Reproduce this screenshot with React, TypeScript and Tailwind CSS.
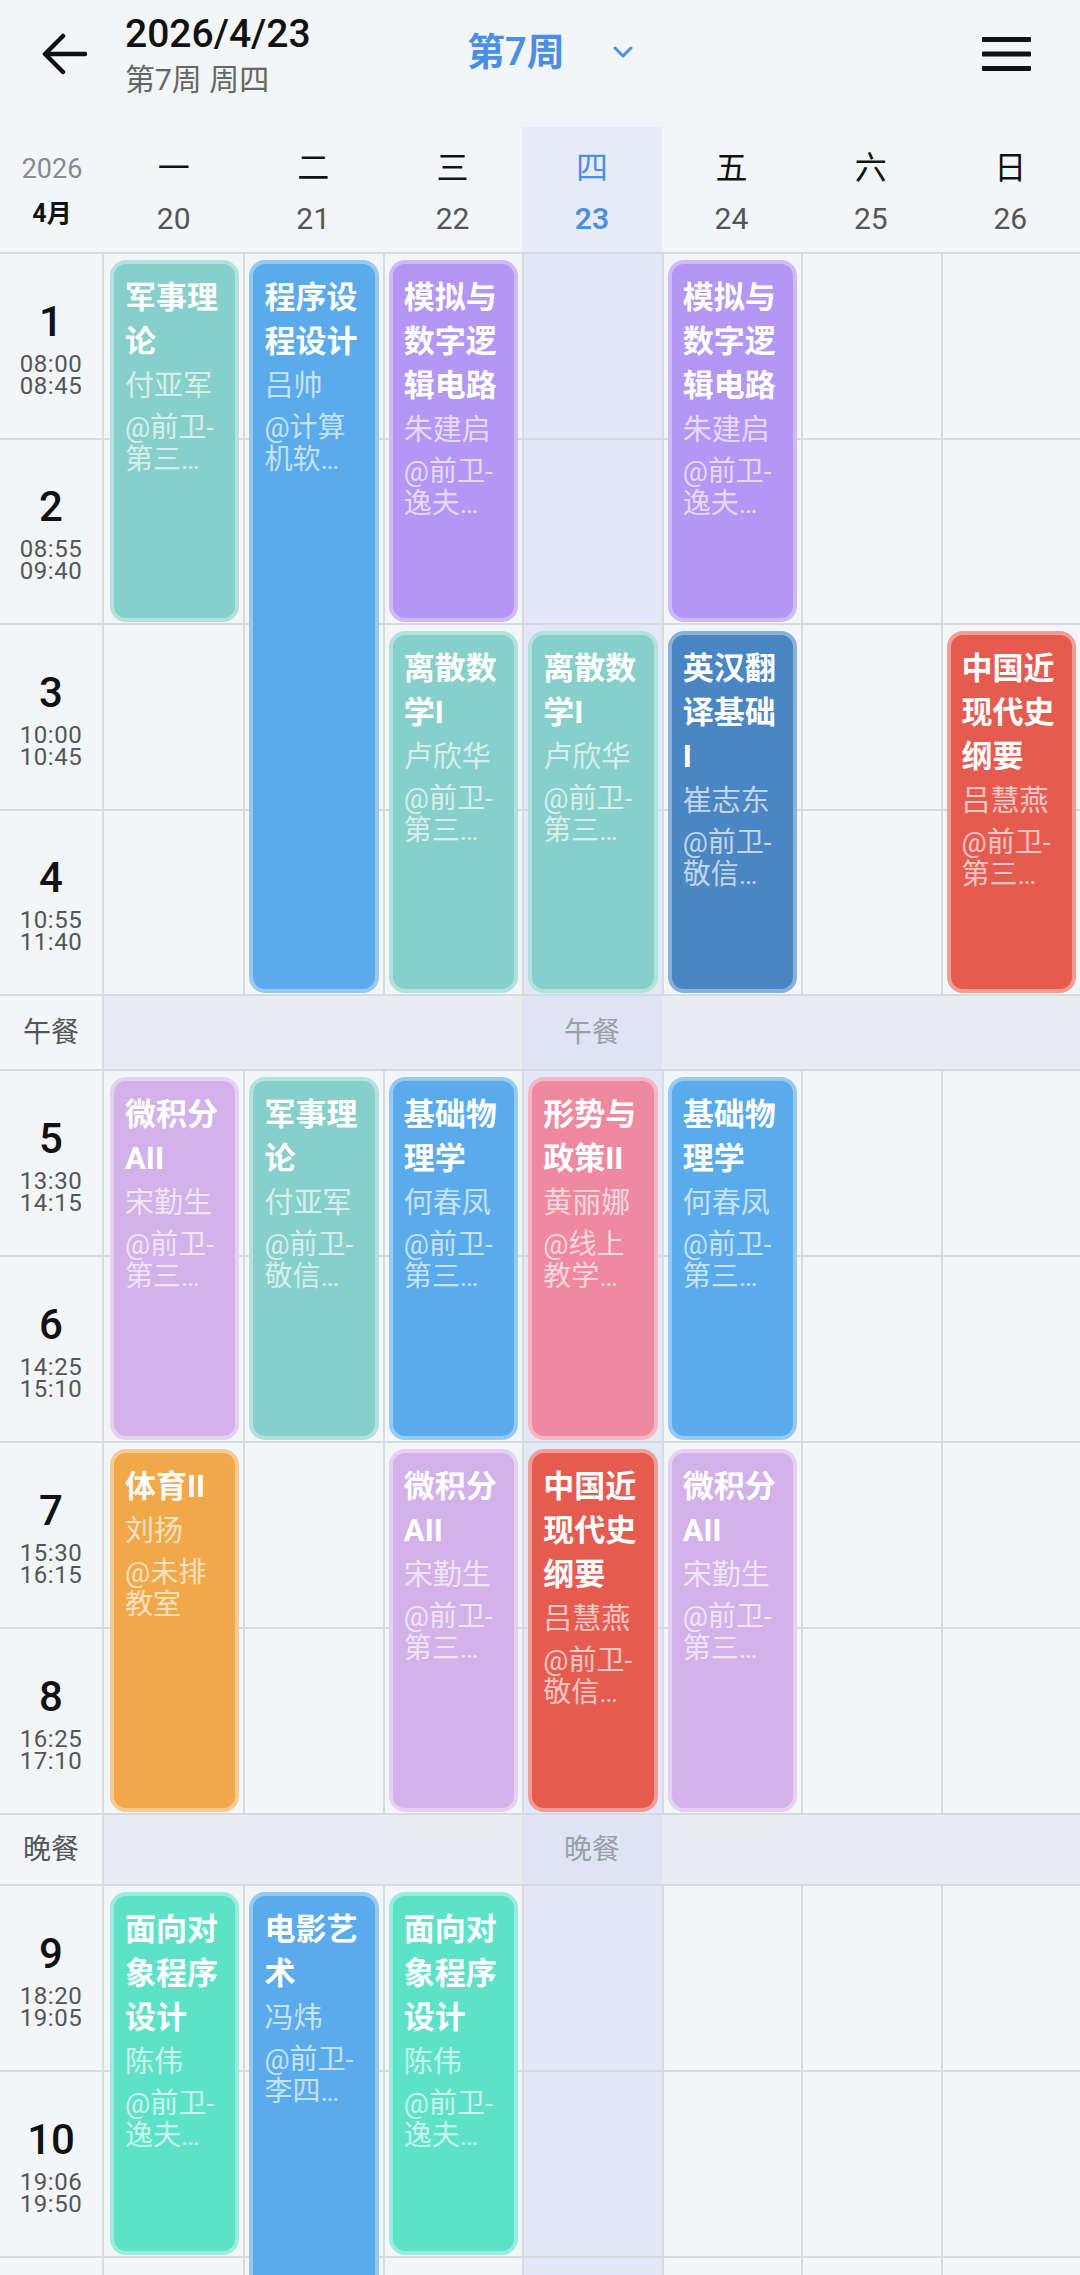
import React from "react";

type Tone = "teal" | "blue" | "violet" | "navy" | "red" | "lilac" | "pink" | "orange" | "mint";

type Course = {
  day: number; // 1..7
  row: number; // body grid row
  span: number;
  title: string[];
  teacher: string;
  place: string[];
  tone: Tone;
};

const toneClass: Record<Tone, string> = {
  teal: "bg-[#87cfca] border-[#b3e2de]",
  blue: "bg-[#5aabeb] border-[#97caf2]",
  violet: "bg-[#b496f5] border-[#cfbaf8]",
  navy: "bg-[#4a86c3] border-[#88b0d9]",
  red: "bg-[#e65b50] border-[#f19c94]",
  lilac: "bg-[#d3b1e9] border-[#e6d0f3]",
  pink: "bg-[#ef899f] border-[#f6b6c4]",
  orange: "bg-[#f0a849] border-[#f6ca90]",
  mint: "bg-[#5ee2c7] border-[#9aedde]",
};

const ROW = [
  "",
  "row-start-1",
  "row-start-2",
  "row-start-3",
  "row-start-4",
  "row-start-5",
  "row-start-6",
  "row-start-7",
  "row-start-8",
  "row-start-9",
  "row-start-10",
  "row-start-11",
  "row-start-12",
  "row-start-13",
];
const COL = ["", "col-start-1", "col-start-2", "col-start-3", "col-start-4", "col-start-5", "col-start-6", "col-start-7", "col-start-8"];
const SPAN = ["", "row-span-1", "row-span-2", "row-span-3", "row-span-4"];

const TODAY = 4;

const days = [
  { name: "一", date: "20" },
  { name: "二", date: "21" },
  { name: "三", date: "22" },
  { name: "四", date: "23" },
  { name: "五", date: "24" },
  { name: "六", date: "25" },
  { name: "日", date: "26" },
];

type BodyRow = { kind: "period"; n: string; start: string; end: string } | { kind: "meal"; label: string };

// the 11th period is only a sliver at the bottom edge, so it has no label
const rows: BodyRow[] = [
  { kind: "period", n: "1", start: "08:00", end: "08:45" },
  { kind: "period", n: "2", start: "08:55", end: "09:40" },
  { kind: "period", n: "3", start: "10:00", end: "10:45" },
  { kind: "period", n: "4", start: "10:55", end: "11:40" },
  { kind: "meal", label: "午餐" },
  { kind: "period", n: "5", start: "13:30", end: "14:15" },
  { kind: "period", n: "6", start: "14:25", end: "15:10" },
  { kind: "period", n: "7", start: "15:30", end: "16:15" },
  { kind: "period", n: "8", start: "16:25", end: "17:10" },
  { kind: "meal", label: "晚餐" },
  { kind: "period", n: "9", start: "18:20", end: "19:05" },
  { kind: "period", n: "10", start: "19:06", end: "19:50" },
  { kind: "period", n: "", start: "", end: "" },
];

const military = { title: ["军事理", "论"], teacher: "付亚军" };
const calculus = { title: ["微积分", "AII"], teacher: "宋勤生", place: ["@前卫-", "第三…"] };
const oop = { title: ["面向对", "象程序", "设计"], teacher: "陈伟", place: ["@前卫-", "逸夫…"] };
const logic = { title: ["模拟与", "数字逻", "辑电路"], teacher: "朱建启", place: ["@前卫-", "逸夫…"] };
const discrete = { title: ["离散数", "学I"], teacher: "卢欣华", place: ["@前卫-", "第三…"] };
const physics = { title: ["基础物", "理学"], teacher: "何春凤", place: ["@前卫-", "第三…"] };
const history = { title: ["中国近", "现代史", "纲要"], teacher: "吕慧燕" };

const courses: Course[] = [
  { day: 1, row: 1, span: 2, ...military, place: ["@前卫-", "第三…"], tone: "teal" },
  { day: 1, row: 6, span: 2, ...calculus, tone: "lilac" },
  { day: 1, row: 8, span: 2, title: ["体育II"], teacher: "刘扬", place: ["@未排", "教室"], tone: "orange" },
  { day: 1, row: 11, span: 2, ...oop, tone: "mint" },

  { day: 2, row: 1, span: 4, title: ["程序设", "程设计"], teacher: "吕帅", place: ["@计算", "机软…"], tone: "blue" },
  { day: 2, row: 6, span: 2, ...military, place: ["@前卫-", "敬信…"], tone: "teal" },
  { day: 2, row: 11, span: 3, title: ["电影艺", "术"], teacher: "冯炜", place: ["@前卫-", "李四…"], tone: "blue" },

  { day: 3, row: 1, span: 2, ...logic, tone: "violet" },
  { day: 3, row: 3, span: 2, ...discrete, tone: "teal" },
  { day: 3, row: 6, span: 2, ...physics, tone: "blue" },
  { day: 3, row: 8, span: 2, ...calculus, tone: "lilac" },
  { day: 3, row: 11, span: 2, ...oop, tone: "mint" },

  { day: 4, row: 3, span: 2, ...discrete, tone: "teal" },
  { day: 4, row: 6, span: 2, title: ["形势与", "政策II"], teacher: "黄丽娜", place: ["@线上", "教学…"], tone: "pink" },
  { day: 4, row: 8, span: 2, ...history, place: ["@前卫-", "敬信…"], tone: "red" },

  { day: 5, row: 1, span: 2, ...logic, tone: "violet" },
  { day: 5, row: 3, span: 2, title: ["英汉翻", "译基础", "I"], teacher: "崔志东", place: ["@前卫-", "敬信…"], tone: "navy" },
  { day: 5, row: 6, span: 2, ...physics, tone: "blue" },
  { day: 5, row: 8, span: 2, ...calculus, tone: "lilac" },

  { day: 7, row: 3, span: 2, ...history, place: ["@前卫-", "第三…"], tone: "red" },
];

function TopBar() {
  return (
    <div className="flex h-[127px] items-start">
      <div className="flex w-[467px] items-start">
        <svg className="ml-[41px] mt-[33px]" width="46" height="42" viewBox="0 0 46 42" fill="none">
          <path d="M44 21H5M22 3L4 21L22 39" stroke="#111" strokeWidth="4.5" strokeLinecap="round" strokeLinejoin="round" />
        </svg>
        <div className="ml-[38px] mt-[12px]">
          <div className="text-[39px] font-medium leading-[44px] text-[#111]">2026/4/23</div>
          <div className="mt-[6px] text-[30px] leading-[36px] text-[#666]">第7周 周四</div>
        </div>
      </div>
      <div className="mt-[28px] flex items-center">
        <span className="text-[38px] font-semibold leading-[48px] text-[#4a8fe4]">第7周</span>
        <svg className="ml-[48px]" width="20" height="12" viewBox="0 0 20 12" fill="none">
          <path d="M2 2L10 10L18 2" stroke="#4a8fe4" strokeWidth="3" strokeLinecap="round" strokeLinejoin="round" />
        </svg>
      </div>
      <svg className="ml-auto mr-[49px] mt-[37px]" width="49" height="34" viewBox="0 0 49 34">
        <rect x="0" y="0" width="49" height="5" rx="1" fill="#111" />
        <rect x="0" y="14.5" width="49" height="5" rx="1" fill="#111" />
        <rect x="0" y="29" width="49" height="5" rx="1" fill="#111" />
      </svg>
    </div>
  );
}

function WeekHeader() {
  return (
    <div className="grid h-[127px] grid-cols-[104px_repeat(7,minmax(0,1fr))] border-b-2 border-[#d6dbe0]">
      <div className="flex flex-col items-center pt-[24px]">
        <span className="text-[27px] leading-[36px] text-[#8a8a8a]">2026</span>
        <span className="mt-[9px] text-[25px] font-bold leading-[36px] text-[#111]">4月</span>
      </div>
      {days.map((d, i) => {
        const isToday = i + 1 === TODAY;
        return (
          <div key={d.name} className={["flex flex-col items-center pt-[21px]", isToday ? "bg-[#e7ecf8]" : ""].join(" ")}>
            <span className={["text-[32px] leading-[40px]", isToday ? "text-[#4a8fe4]" : "text-[#111]"].join(" ")}>{d.name}</span>
            <span
              className={[
                "mt-[11px] text-[30px] leading-[40px]",
                isToday ? "font-semibold text-[#4a8fe4]" : "text-[#555]",
              ].join(" ")}
            >
              {d.date}
            </span>
          </div>
        );
      })}
    </div>
  );
}

function CourseCard({ course }: { course: Course }) {
  return (
    <div className={[COL[course.day + 1], ROW[course.row], SPAN[course.span], "z-10 pb-[3px] pl-[6px] pr-[4px] pt-[6px]"].join(" ")}>
      <div className={["h-full overflow-hidden rounded-[16px] border-4 pl-[11px] pr-[4px] pt-[12px]", toneClass[course.tone]].join(" ")}>
        {course.title.map((line) => (
          <div key={line} className="whitespace-nowrap text-[31px] font-bold leading-[44px] text-white">
            {line}
          </div>
        ))}
        <div className="whitespace-nowrap text-[29px] leading-[44px] text-white/65">{course.teacher}</div>
        <div className="mt-[4px]">
          {course.place.map((line) => (
            <div key={line} className="whitespace-nowrap text-[28px] leading-[32px] text-white/65">
              {line}
            </div>
          ))}
        </div>
      </div>
    </div>
  );
}

function Timetable() {
  const cells: React.ReactNode[] = [];

  rows.forEach((row, ri) => {
    const r = ri + 1;
    if (row.kind === "meal") {
      cells.push(
        <div
          key={`t${r}`}
          className={[ROW[r], COL[1], "flex items-center justify-center border-b-2 border-r-2 border-[#d6dbe0] text-[28px] leading-[36px] text-[#555]"].join(" ")}
        >
          {row.label}
        </div>,
      );
      for (let c = 1; c <= 7; c++) {
        const isToday = c === TODAY;
        cells.push(
          <div
            key={`m${r}-${c}`}
            className={[
              ROW[r],
              COL[c + 1],
              "flex items-center justify-center border-b-2 border-[#d6dbe0] text-[28px] leading-[36px] text-[#9aa0a8]",
              isToday ? "bg-[#dfe4f4]" : "bg-[#e9ecf0]",
            ].join(" ")}
          >
            {isToday ? row.label : null}
          </div>,
        );
      }
      return;
    }

    cells.push(
      <div
        key={`t${r}`}
        className={[ROW[r], COL[1], "flex flex-col items-center justify-center border-b-2 border-r-2 border-[#d6dbe0] pt-[4px]"].join(" ")}
      >
        {row.n ? <span className="text-[42px] font-medium leading-[46px] text-[#111]">{row.n}</span> : null}
        {row.start ? (
          <p className="mt-[8px] text-center text-[24px] leading-[22px] tracking-[0.5px] text-[#555]">
            {row.start}
            <br />
            {row.end}
          </p>
        ) : null}
      </div>,
    );
    for (let c = 1; c <= 7; c++) {
      cells.push(
        <div
          key={`c${r}-${c}`}
          className={[
            ROW[r],
            COL[c + 1],
            "border-b-2 border-[#d6dbe0]",
            c > 1 ? "border-l-2" : "",
            c === TODAY ? "bg-[#e3e8f8]" : "",
          ].join(" ")}
        />,
      );
    }
  });

  return (
    <div className="grid grid-cols-[104px_repeat(7,minmax(0,1fr))] grid-rows-[repeat(4,185.5px)_75px_repeat(4,186px)_71px_repeat(3,186px)]">
      {cells}
      {courses.map((course) => (
        <CourseCard key={`${course.day}-${course.row}`} course={course} />
      ))}
    </div>
  );
}

export default function App() {
  return (
    <div className="h-[2275px] w-[1080px] overflow-hidden bg-[#f2f6f9] font-[family-name:Roboto,'Noto_Sans_CJK_SC',sans-serif] text-[#111]">
      <TopBar />
      <WeekHeader />
      <Timetable />
    </div>
  );
}
